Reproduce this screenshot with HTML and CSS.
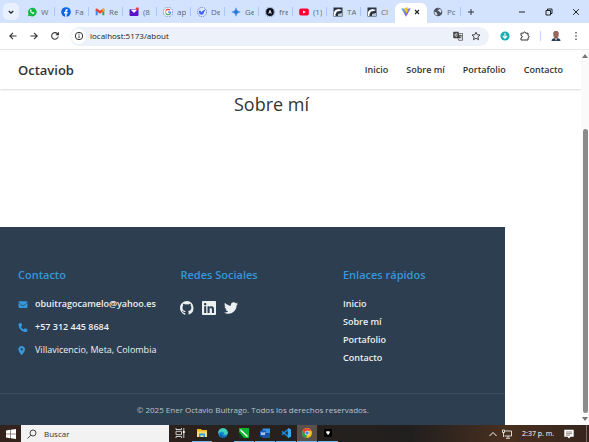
FILE: index.html
```html
<!DOCTYPE html>
<html lang="es">
<head>
<meta charset="utf-8">
<meta name="viewport" content="width=device-width, initial-scale=1">
<title>Octaviob - Sobre mí</title>
<link rel="stylesheet" href="styles.css">
</head>
<body>
<div class="tabstrip">
  <button class="tab-search" aria-label="Buscar pestañas"><svg viewBox="0 0 10 10"><path d="M2.8 4l2.2 2.2L7.2 4" fill="none" stroke="#222" stroke-width="1.3"/></svg></button>
  <div class="tabs">
    <a class="tab" href="#"><svg viewBox="0 0 10 10"><path d="M.8 9.3l.7-2.4A4.3 4.3 0 1 1 3.100 8.700z" fill="#10b83c"/><path d="M3.300 2.800c.9-.7 1.200.1 1.300.8l-.4.6c.3.700.8 1.100 1.500 1.400l.6-.5c.7.2 1.300.5.9 1.200C5.900 8.200 2.100 5 3.300 2.800z" fill="#fff"/></svg><span>W</span></a>
    <a class="tab" href="#"><svg viewBox="0 0 10 10"><circle cx="5" cy="5" r="4.800" fill="#0866e8"/><path d="M4.200 9.800V6.400H3.100V5h1.100V4c0-1.500.9-2.100 2.600-1.800v1.200c-.8-.1-1.200.1-1.200.8V5h1.200l-.2 1.400h-1v3.400z" fill="#fff"/></svg><span>Fa</span></a>
    <a class="tab" href="#"><svg viewBox="0 0 10 10"><path d="M.7 2.300v6h2V4.500z" fill="#4285f4"/><path d="M9.300 2.300v6h-2V4.500z" fill="#34a853"/><path d="M.7 3.500V2.300c0-1 1-1.100 1.600-.6L5 3.800l2.700-2.100c.7-.5 1.600-.4 1.600.6v1.200L5 6.700z" fill="#ea4335"/><path d="M7.300 2v3l2-1.500V2.300c0-.9-1.100-1.200-2-.3z" fill="#fbbc04"/></svg><span>Re</span></a>
    <a class="tab" href="#"><svg viewBox="0 0 10 10"><rect x=".5" y="2" width="9" height="7" rx="1" fill="#5b12c9"/><path d="M1.500 2.500h7L5 6z" fill="#fff"/><circle cx="8.300" cy="1.800" r="1.500" fill="#f0364a"/></svg><span>(8</span></a>
    <a class="tab" href="#"><svg viewBox="0 0 10 10"><circle cx="5" cy="5" r="4.700" fill="#fff" stroke="#4a6a9a" stroke-width=".7" stroke-dasharray="1.500 .8"/><g fill="none" stroke-width="1.300"><path d="M2.800 3.700A2.600 2.600 0 0 1 6.900 3.200" stroke="#ea4335"/><path d="M2.800 3.700a2.600 2.600 0 0 0 0 2.600" stroke="#fbbc04"/><path d="M2.800 6.300a2.600 2.600 0 0 0 4 .6" stroke="#34a853"/><path d="M5 5.200h2.600c0 .8-.3 1.300-.8 1.700" stroke="#4285f4"/></g></svg><span>ap</span></a>
    <a class="tab" href="#"><svg viewBox="0 0 10 10"><circle cx="5" cy="5" r="4.600" fill="#dce7ff" stroke="#4668b0" stroke-width=".7" stroke-dasharray="1.500 .8"/><path d="M1.800 4.200c1-.8 2 0 2.900.8.6-.5 1-1.600 3.500-2.200-.1 1.100-.4 1.600-1.100 2C7 7 5.800 7.900 4.200 7.700 2.600 7.500 1.500 5.900 1.800 4.200z" fill="#4367f5"/></svg><span>De</span></a>
    <a class="tab" href="#"><svg viewBox="0 0 10 10"><path d="M5 .8Q5.400 4.600 9.200 5 5.400 5.400 5 9.200 4.600 5.400.8 5 4.600 4.600 5 .8z" fill="#2879d8" stroke="#2879d8" stroke-width=".4"/></svg><span>Ge</span></a>
    <a class="tab" href="#"><svg viewBox="0 0 10 10"><circle cx="5" cy="5" r="4.700" fill="none" stroke="#445678" stroke-width=".6" stroke-dasharray="1.500 .8"/><circle cx="5" cy="5" r="3.900" fill="#080b18"/><path d="M3.700 6.700L5 3.200l1.300 3.500M4.200 5.700h1.600" fill="none" stroke="#fff" stroke-width=".8"/></svg><span>fre</span></a>
    <a class="tab" href="#"><svg viewBox="0 0 10 10"><rect x=".2" y="1.600" width="9.600" height="6.800" rx="1.700" fill="#ff0033"/><path d="M4 3.400v3.200L6.800 5z" fill="#fff"/></svg><span>(1)</span></a>
    <a class="tab" href="#"><svg viewBox="0 0 10 10"><path d="M.5.5h9v9h-9z" fill="#273340"/><path d="M1 9V5l1.500-2 3-1L9 3 7 4 4 4.500 2.500 7v2z" fill="#fff"/><path d="M5 9V7l4-1v3z" fill="#b8c4ce"/></svg><span>TA</span></a>
    <a class="tab plain" href="#"><svg viewBox="0 0 10 10"><path d="M.5.5h9v9h-9z" fill="#273340"/><path d="M1 9V5l1.500-2 3-1L9 3 7 4 4 4.500 2.500 7v2z" fill="#fff"/><path d="M5 9V7l4-1v3z" fill="#b8c4ce"/></svg><span>Cl</span></a>
    <div class="tab active"><svg viewBox="0 0 10 10"><defs><linearGradient id="vite" x2="1" y2="1"><stop stop-color="#41bfff"/><stop offset="1" stop-color="#a820f5"/></linearGradient></defs><path d="M.2 1.200L5 9.700l4.800-8.500L5 2z" fill="url(#vite)"/><path d="M3.300.9L7 .3 6.300 3.100l1 .1L4.900 7l.2-2.700-1.600.2z" fill="#ffc51c"/></svg><button class="close" aria-label="Cerrar pestaña"><svg viewBox="0 0 8 8"><path d="M2 2l4 4M6 2L2 6" stroke="#222" stroke-width="1.100"/></svg></button></div>
    <a class="tab" href="#"><svg viewBox="0 0 10 10"><circle cx="5" cy="5" r="4.300" fill="#4b5058"/><path d="M1.500 4.500l2 1 .8 1.500v1.600C2.300 8.200 1.200 6.500 1.500 4.500zM4 1.600l1.800-.1.200 1.400-1.700.6 1.900 1 1.800 1.600.5-2.500-1-1.400z" fill="#d3e1fb"/></svg><span>Pc</span></a>
  </div>
  <button class="tool" aria-label="Nueva pestaña"><svg viewBox="0 0 10 10"><path d="M5 2v6M2 5h6" stroke="#333" stroke-width="1"/></svg></button>
  <div class="window-controls">
    <button class="tool" aria-label="Minimizar"><svg viewBox="0 0 10 10"><path d="M2 5h6" stroke="#222"/></svg></button>
    <button class="tool" aria-label="Restaurar"><svg viewBox="0 0 10 10"><path d="M2 3.500h4.500V8H2zM3.500 3.500V2H8v4.500H6.500" fill="none" stroke="#222"/></svg></button>
    <button class="tool" aria-label="Cerrar"><svg viewBox="0 0 10 10"><path d="M2.200 2.200l5.600 5.600M7.800 2.200L2.200 7.800" stroke="#222"/></svg></button>
  </div>
</div>

<div class="toolbar">
  <div class="history">
    <button class="tool" aria-label="Atrás"><svg viewBox="0 0 10 10"><path d="M8.500 5H2M5 1.800L1.800 5 5 8.200" fill="none" stroke="#333" stroke-width="1.100"/></svg></button>
    <button class="tool" aria-label="Adelante"><svg viewBox="0 0 10 10"><path d="M1.500 5H8M5 1.800L8.200 5 5 8.200" fill="none" stroke="#333" stroke-width="1.100"/></svg></button>
    <button class="tool" aria-label="Recargar"><svg viewBox="0 0 10 10"><path d="M8.200 5.500A3.300 3.300 0 1 1 7.400 2.700L8.200 3.600M8.400 1.200v2.600H5.800" fill="none" stroke="#333" stroke-width="1.100"/></svg></button>
  </div>
  <div class="address">
    <button class="site-info" aria-label="Información del sitio"><svg viewBox="0 0 10 10"><circle cx="5" cy="5" r="3.700" fill="none" stroke="#333"/><path d="M5 4.500v2.600M5 2.700v1" stroke="#333"/></svg></button>
    <input class="url" type="text" aria-label="Dirección" value="localhost:5173/about">
    <button class="tool" aria-label="Traducir"><svg viewBox="0 0 10 10"><path d="M1 .8h4.500l1.700 6.400H1c-.5 0-.8-.3-.8-.8V1.600C.2 1.100.5.800 1 .8z" fill="#444"/><path d="M4.400 3.900H2.900M4.300 3a1.400 1.400 0 1 0 0 2" fill="none" stroke="#fff" stroke-width=".7"/><path d="M6.200 2.500H9.500v6.800H5.700L5 7.300M6 4.500h2.800M7.400 3.800v.7M8.400 4.500C8 6 7.300 6.800 6.700 7.200M6.900 5.300l1.700 2" fill="none" stroke="#444" stroke-width=".7"/></svg></button>
    <button class="tool" aria-label="Marcador"><svg viewBox="0 0 10 10"><path d="M5 1.200l1.200 2.500 2.800.3-2.100 1.900.6 2.800L5 7.300 2.500 8.700l.6-2.800L1 4l2.800-.3z" fill="none" stroke="#333" stroke-width=".9"/></svg></button>
  </div>
  <div class="extensions">
    <button class="tool" aria-label="Descargas"><svg viewBox="0 0 10 10"><circle cx="5" cy="5" r="4.600" fill="#18aeb4"/><path d="M5 2v5M2.900 5L5 7.200 7.100 5" fill="none" stroke="#fff" stroke-width="1.100"/></svg></button>
    <button class="tool" aria-label="Extensiones"><svg viewBox="0 0 10 10"><path d="M1 2.200h2.500c0-1.600 2.200-1.600 2.200 0H8v2.400c1.500 0 1.500 2.200 0 2.200V9H1V6.800c1.800 0 1.800-2.300 0-2.300z" fill="none" stroke="#333" stroke-width="1"/></svg></button>
    <i class="divider"></i>
    <button class="tool" aria-label="Perfil"><svg viewBox="0 0 10 10"><path d="M.5 10c0-2 1.500-3 4.500-3s4.500 1 4.500 3z" fill="#263b5b"/><path d="M4 7l1 3 1-3z" fill="#fff"/><ellipse cx="5" cy="4" rx="2.700" ry="3.800" fill="#ad7567"/><path d="M2.200 3.800C2 .5 3.500 0 5 0s3 .5 2.800 3.800L7 2.300H3z" fill="#94615a"/><path d="M3.200 3.700h1.300M5.500 3.700h1.300M4 6h2" stroke="#45323a" stroke-width=".7"/></svg></button>
    <button class="tool" aria-label="Menú"><svg viewBox="0 0 10 10" fill="#333"><circle cx="5" cy="1.700" r=".8"/><circle cx="5" cy="5" r=".8"/><circle cx="5" cy="8.300" r=".8"/></svg></button>
  </div>
</div>

<div class="viewport">
  <div class="page">
    <header class="site-header">
      <a class="brand" href="#">Octaviob</a>
      <nav class="site-nav"><a href="#">Inicio</a><a href="#">Sobre mí</a><a href="#">Portafolio</a><a href="#">Contacto</a></nav>
    </header>
    <main><h1>Sobre mí</h1></main>
    <footer class="site-footer">
      <div class="footer-grid">
        <section>
          <h2>Contacto</h2>
          <ul class="contact">
            <li><svg viewBox="0 0 512 512"><path d="M48 64C21.500 64 0 85.500 0 112c0 15.100 7.100 29.300 19.200 38.400L236.800 313.600c11.400 8.500 27 8.500 38.400 0L492.800 150.400c12.100-9.100 19.200-23.300 19.200-38.400 0-26.500-21.500-48-48-48zM0 176V384c0 35.300 28.700 64 64 64H448c35.300 0 64-28.700 64-64V176L294.400 339.200c-22.800 17.100-54 17.100-76.800 0z"/></svg><a href="#">obuitragocamelo@yahoo.es</a></li>
            <li><svg viewBox="0 0 512 512"><path d="M164.900 24.600c-7.700-18.600-28-28.500-47.400-23.200l-88 24C12.100 30.200 0 46 0 64c0 247.400 200.600 448 448 448 18 0 33.800-12.100 38.600-29.500l24-88c5.300-19.400-4.600-39.700-23.200-47.400l-96-40c-16.300-6.800-35.200-2.100-46.300 11.600L304.700 368C234.300 334.700 177.300 277.700 144 207.300L193.300 167c13.700-11.200 18.400-30 11.600-46.300z"/></svg><a href="#">+57 312 445 8684</a></li>
            <li><svg viewBox="0 0 512 512"><path transform="translate(-10)" d="M215.700 499.200C267 435 384 279.400 384 192 384 86 298 0 192 0S0 86 0 192c0 87.400 117 243 168.300 307.200 12.300 15.300 35.100 15.300 47.400 0zM192 128a64 64 0 1 1 0 128 64 64 0 1 1 0-128z"/></svg><span>Villavicencio, Meta, Colombia</span></li>
          </ul>
        </section>
        <section>
          <h2>Redes Sociales</h2>
          <div class="social">
            <a href="#" aria-label="GitHub"><svg viewBox="0 0 16 16"><path d="M8 0C3.600 0 0 3.600 0 8c0 3.500 2.300 6.500 5.500 7.600.4.100.5-.2.500-.4v-1.500c-2 .4-2.700-.5-2.900-1-.1-.3-.5-1-.8-1.200-.3-.2-.7-.5 0-.5.6 0 1.100.6 1.200.8.700 1.200 1.900.9 2.400.7.100-.5.300-.9.500-1.100-1.800-.2-3.600-.9-3.600-4 0-.9.300-1.600.8-2.100-.1-.2-.4-1 .1-2.100 0 0 .7-.2 2.200.8a7.500 7.500 0 0 1 4 0c1.500-1 2.200-.8 2.200-.8.4 1.100.2 1.900.1 2.100.5.600.8 1.300.8 2.100 0 3.100-1.900 3.700-3.700 3.900.3.300.5.700.5 1.500v2.200c0 .2.100.5.500.4A8 8 0 0 0 8 0z"/></svg></a>
            <a href="#" aria-label="LinkedIn"><svg viewBox="0 0 448 448"><path d="M416 0H31.900C14.300 0 0 14.500 0 32.300v383.400C0 433.500 14.300 448 31.900 448H416c17.600 0 32-14.500 32-32.300V32.300C448 14.500 433.600 0 416 0zM135.400 384H69V170.200h66.500V384zM102.200 141c-21.300 0-38.500-17.300-38.500-38.500S80.900 64 102.200 64s38.500 17.300 38.500 38.500S123.500 141 102.200 141zm282.100 243h-66.400V280c0-24.800-.5-56.700-34.500-56.700-34.600 0-39.900 27-39.900 54.900V384h-66.400V170.200h63.700v29.200h.9c8.900-16.800 30.600-34.500 62.900-34.500 67.200 0 79.700 44.300 79.700 101.900z"/></svg></a>
            <a href="#" aria-label="Twitter"><svg viewBox="0 0 512 512"><path d="M459.400 151.700c.3 4.500.3 9.100.3 13.600 0 138.700-105.600 298.600-298.600 298.600-59.500 0-114.700-17.200-161.100-47.100 8.400 1 16.600 1.300 25.300 1.300 49.100 0 94.200-16.600 130.300-44.800-46.100-1-84.800-31.200-98.100-72.800 6.500 1 13 1.600 19.800 1.600 9.400 0 18.800-1.300 27.600-3.600-48.100-9.700-84.100-52-84.100-103v-1.300c14 7.800 30.200 12.700 47.400 13.300-28.300-18.800-46.800-51-46.800-87.400 0-19.500 5.200-37.400 14.300-53 51.700 63.700 129.300 105.300 216.400 109.800-1.600-7.800-2.600-15.900-2.600-24 0-57.800 46.800-104.900 104.900-104.900 30.200 0 57.500 12.700 76.700 33.100 23.700-4.500 46.500-13.300 66.600-25.300-7.800 24.400-24.400 44.800-46.100 57.800 21.100-2.300 41.600-8.100 60.400-16.200-14.300 20.800-32.200 39.300-52.600 54.300z"/></svg></a>
          </div>
        </section>
        <section>
          <h2>Enlaces rápidos</h2>
          <ul class="links"><li><a href="#">Inicio</a></li><li><a href="#">Sobre mí</a></li><li><a href="#">Portafolio</a></li><li><a href="#">Contacto</a></li></ul>
        </section>
      </div>
      <p class="copyright">© 2025 Ener Octavio Buitrago. Todos los derechos reservados.</p>
    </footer>
  </div>
  <div class="scrollbar" aria-hidden="true"><i class="arrow up"></i><i class="track"></i><i class="thumb"></i><i class="arrow down"></i></div>
</div>

<div class="taskbar">
  <button class="start" aria-label="Inicio de Windows"><svg viewBox="0 0 10 10"><path d="M0 1.400l4.300-.6v3.900H0zM4.800.7L10 0v4.700H4.800zM0 5.200h4.300v4L0 8.600zM4.800 5.200H10V10l-5.200-.7z" fill="#fff"/></svg></button>
  <label class="search"><svg viewBox="0 0 10 10"><circle cx="6" cy="4" r="3" fill="none" stroke="#333" stroke-width=".9"/><path d="M3.800 6.200L.5 9.500" stroke="#333" stroke-width=".9"/></svg><input type="text" aria-label="Buscar" placeholder="Buscar"></label>
  <div class="apps">
    <button class="app task-view" aria-label="Vista de tareas"><svg viewBox="0 0 10 10"><path d="M1 0v1.500h5.500V0M1 3.300h5.500v3.400H1zM1 10V8.500h5.500V10M8.800 0v10" fill="none" stroke="#ddd" stroke-width=".9"/><path d="M8 3h1.700v2H8z" fill="#fff"/></svg></button>
    <button class="app open" aria-label="Explorador"><svg viewBox="0 0 10 10"><path d="M0 1h4l1 1h5v7H0z" fill="#f0b62d"/><path d="M0 3.500h10V9H0z" fill="#ffdc72"/><path d="M2 9V5.500h6V9H6.500V7.300h-3V9z" fill="#3695d8"/></svg></button>
    <button class="app" aria-label="Edge"><svg viewBox="0 0 10 10"><circle cx="5" cy="5" r="4.800" fill="#168dd5"/><path d="M.3 4C1-.7 8.800-1.500 9.800 4.300c.3 2.300-2.500 3-4 2 .6-1 .1-2.300-1.300-2.500C2.500 3.500 1 4.200.3 6z" fill="#43cfb5"/><path d="M3.500 5.200c-.3 2.200 1.900 3.800 5.400 2.600C6.500 11 2 9.800 1.800 7c0-1 .6-1.600 1.700-1.800z" fill="#0962ad"/></svg></button>
    <button class="app open" aria-label="Editor gráfico"><svg viewBox="0 0 10 10"><path d="M0 0h10v10H0z" fill="#08b72f"/><path d="M1.500 1l7 6.500v2L1.500 3z" fill="#fff"/><path d="M0 4l5 6H0z" fill="#063f1d"/></svg></button>
    <button class="app open" aria-label="Word"><svg viewBox="0 0 10 10"><path d="M2.500.5H10v9H2.500z" fill="#3792e6"/><path d="M2.500 5H10v4.500H2.500z" fill="#174ea6"/><path d="M0 2.500h6v6H0z" fill="#1859bd"/><path d="M1 4l1 3 1-2.500L4 7l1-3" fill="none" stroke="#fff" stroke-width=".7"/></svg></button>
    <button class="app open" aria-label="Visual Studio Code"><svg viewBox="0 0 10 10"><path d="M7.300 1.200v7.600L1 3.400M1 6.600l6.300-5.400" fill="none" stroke="#168ada" stroke-width="1.400"/><path d="M7 0l3 1.300v7.400L7 10z" fill="#35a8f0"/></svg></button>
    <button class="app open current" aria-label="Chrome"><svg viewBox="0 0 10 10"><circle cx="5" cy="5" r="4.900" fill="#fbc116"/><path d="M.8 2.500A4.900 4.900 0 0 1 9.300 2.700H5L2.900 6.200z" fill="#e74033"/><path d="M.8 2.500l2.300 3.800L5 7.400l-.7 2.500A4.900 4.900 0 0 1 .8 2.500z" fill="#239b50"/><circle cx="5" cy="5" r="2.200" fill="#fff"/><circle cx="5" cy="5" r="1.700" fill="#3384ed"/></svg></button>
    <button class="app open" aria-label="Aplicación"><svg viewBox="0 0 10 10"><rect x="1" y="1" width="8" height="8" rx="1" fill="#000"/><path d="M3.300 3.300h3.400v2H6v1.200H4.200V5.300h-.9z" fill="#fff"/></svg></button>
  </div>
  <div class="tray">
    <button class="tool" aria-label="Iconos ocultos"><svg viewBox="0 0 10 10"><path d="M1.500 7L5 3.500 8.500 7" fill="none" stroke="#fff"/></svg></button>
    <button class="tool" aria-label="Red"><svg viewBox="0 0 10 10"><path d="M3 2h6.500v5H2.500M6 7v2M4 9.300h4M.5 1h2v2.500h-2zM1.500 3.500V8" fill="none" stroke="#fff" stroke-width=".8"/></svg></button>
    <time>2:37 p. m.</time>
    <button class="tool" aria-label="Notificaciones"><svg viewBox="0 0 10 10"><path d="M.3.800h9.400v7H6.500L5 9.500 3.500 7.800H.3z" fill="#fff"/><path d="M2 3h6M2 4.700h6M2 6.200h4" stroke="#49362b" stroke-width=".6"/></svg></button>
  </div>
  <button class="show-desktop" aria-label="Mostrar escritorio"></button>
</div>
</body>
</html>
```
FILE: styles.css
```css
* { box-sizing: border-box; }

body {
  margin: 0;
  height: 100vh;
  display: flex;
  flex-direction: column;
  overflow: hidden;
  background: #fff;
  color: #333;
  font: 9px/14px "Open Sans", "Noto Sans", sans-serif;
}

button, input { border: 0; padding: 0; background: none; font: inherit; color: inherit; }
a { color: inherit; text-decoration: none; }
ul { list-style: none; margin: 0; padding: 0; }
h1, h2, p { margin: 0; }
svg { display: block; flex: none; }

.tool { display: grid; place-items: center; flex: none; }
.tool svg { width: 10px; height: 10px; }

/* Browser tabs */
.tabstrip { display: flex; align-items: center; flex: none; height: 23px; background: #d3e3fd; }
.tab-search { width: 16px; height: 17px; margin: 0 2px 0 3px; border-radius: 5px; background: #e9f1ff; display: grid; place-items: center; }
.tab-search svg { width: 10px; height: 10px; }
.tabs { display: flex; align-self: stretch; }
.tab { position: relative; display: flex; align-items: center; gap: 4px; width: 34px; padding-left: 6px; font-size: 8px; color: #5c6675; overflow: hidden; }
.tab > svg { width: 10px; height: 10px; }
.tab span { width: 9px; overflow: hidden; white-space: nowrap; }
.tab:not(.active):not(.plain)::after { content: ""; position: absolute; right: 0; top: 7px; width: 1px; height: 9px; background: #a8c7fa; }
.tab.active { width: 32px; margin: 3px 0 0; padding: 0 0 3px 6px; border-radius: 6px 6px 0 0; gap: 2px; background: #fff; }
.close svg { width: 8px; height: 8px; }
.tabstrip > .tool { margin-left: 5px; }
.window-controls { display: flex; gap: 17px; margin-left: auto; padding-right: 8px; }

/* Address bar */
.toolbar { display: flex; align-items: center; flex: none; height: 27px; border-bottom: 1px solid #e6e8ec; background: #fff; }
.history { display: flex; gap: 11px; padding: 0 10px 0 8px; }
.address { display: flex; align-items: center; flex: 1; gap: 8px; height: 19px; padding: 0 8px 0 1px; border-radius: 10px; background: #ecf1fa; }
.site-info { width: 15px; height: 15px; border-radius: 8px; background: #fff; display: grid; place-items: center; }
.site-info svg { width: 10px; height: 10px; }
.url { flex: 1; min-width: 0; margin-left: -4px; font-size: 8px; color: #222; }
.extensions { display: flex; align-items: center; gap: 10px; padding: 0 8px 0 11px; }
.divider { width: 1px; height: 10px; background: #c5dafa; }

/* Site */
.viewport { display: flex; flex: 1; min-height: 0; }
.page { display: flex; flex-direction: column; flex: 1; min-width: 0; }
.site-header { display: flex; align-items: center; justify-content: space-between; height: 39px; padding: 0 18px; box-shadow: 0 1px 2px rgba(0, 0, 0, .15); }
.brand { font-size: 13px; line-height: 18px; font-weight: 600; }
.site-nav { display: flex; gap: 18px; font-weight: 600; }
main { flex: 1; padding: 3px 38px 0 0; text-align: center; }
h1 { font-size: 18px; line-height: 24px; font-weight: 400; }

.site-footer { width: 87%; padding-top: 40px; background: #2c3e50; color: #ecf0f1; }
.footer-grid { display: grid; grid-template-columns: repeat(3, 1fr); gap: 18px; padding: 0 18px 28px; }
h2 { margin-bottom: 14px; font-size: 11px; line-height: 16px; font-weight: 600; color: #3498db; }
.contact { display: grid; gap: 9px; }
.contact li { display: flex; align-items: center; gap: 7px; white-space: nowrap; }
.contact svg { width: 10px; height: 9px; fill: #3498db; }
.contact a, .links a { font-weight: 600; }
.social { display: flex; gap: 8px; padding-top: 4px; }
.social svg { width: 14px; height: 14px; fill: #ecf0f1; }
.links { display: grid; gap: 4px; }
.copyright { padding: 9px 0 8px; border-top: 1px solid #3b4d5f; text-align: center; font-size: 8px; color: #bdc3c7; }

.scrollbar { display: flex; flex-direction: column; align-items: center; width: 8px; padding: 4px 0; background: #fafafa; }
.arrow { border: 3px solid transparent; border-top-width: 0; border-bottom: 4px solid #777; }
.arrow.down { border-top: 4px solid #777; border-bottom-width: 0; margin-top: 4px; }
.track { flex: 1; }
.thumb { flex: 4; width: 5px; border-radius: 3px; background: #8b8b8b; }

/* Taskbar */
.taskbar { display: flex; align-items: stretch; flex: none; height: 17px; background: linear-gradient(90deg, #32231c, #211f1e 70%, #49301f 86%, #36251e); color: #fff; }
.start { width: 21px; display: grid; place-items: center; }
.start svg { width: 10px; height: 10px; }
.search { display: flex; align-items: center; gap: 7px; width: 148px; padding-left: 6px; background: #f2f2f2; color: #333; }
.search svg { width: 10px; height: 10px; }
.search input { flex: 1; min-width: 0; font-size: 8px; }
.search input::placeholder { color: #333; opacity: 1; }
.apps { display: flex; gap: 1px; }
.app { display: grid; place-items: center; width: 20px; border-bottom: 1px solid transparent; }
.app svg { width: 10px; height: 10px; }
.app.task-view { width: 22px; }
.app.open { border-bottom-color: #76b9ed; }
.app.current { background-color: #5b514c; }
.tray { display: flex; align-items: center; gap: 4px; margin-left: auto; padding-right: 12px; white-space: nowrap; }
.tray time { margin: 0 6px; font: 7px/14px "Open Sans", sans-serif; }
.show-desktop { width: 3px; border-left: 1px solid #776b64; }
```
